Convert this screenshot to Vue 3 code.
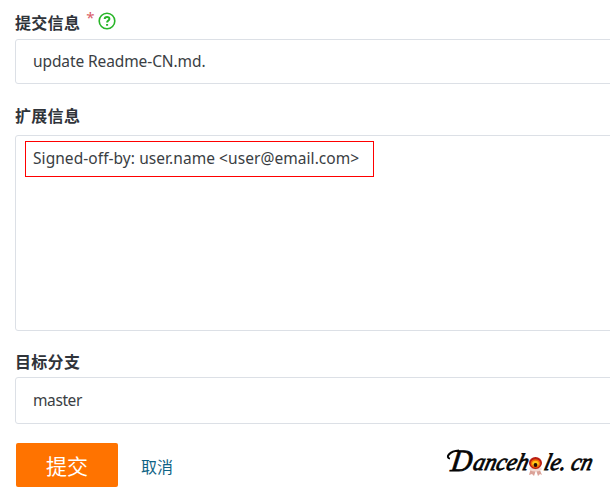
<script setup>
import { ref } from 'vue'

const message = ref('update Readme-CN.md.')
const extended = ref('Signed-off-by: user.name <user@email.com>')
const branch = ref('master')
</script>

<template>
  <main class="form">
    <div class="label first">
      <span>提交信息</span>
      <span class="required">*</span>
      <svg class="help" viewBox="0 0 18 18">
        <circle cx="9" cy="9" r="7.8" />
        <path d="M6.7 7.1C6.7 4.2 11.4 4.2 11.4 6.9C11.4 8.6 9.1 8.5 9.1 10.6M9.1 12V13.7" />
      </svg>
    </div>
    <div class="field message"><span class="value t1">{{ message }}</span></div>

    <div class="label second">扩展信息</div>
    <div class="field extended">
      <div class="marked"><span class="value t2">{{ extended }}</span></div>
    </div>

    <div class="label third">目标分支</div>
    <div class="field branch"><span class="value t3">{{ branch }}</span></div>

    <div class="actions">
      <button class="submit">提交</button>
      <a class="cancel">取消</a>
      <svg class="brand" viewBox="0 0 150 40">
        <g class="script">
          <text class="cap" transform="translate(9 28) skewX(-8)" textLength="21" lengthAdjust="spacingAndGlyphs">D</text>
          <text transform="translate(31 27) skewX(-14)" textLength="55" lengthAdjust="spacingAndGlyphs">anceh</text>
          <text transform="translate(102 27) skewX(-14)" textLength="22" lengthAdjust="spacingAndGlyphs">le.</text>
          <text transform="translate(129 27) skewX(-14)" textLength="21" lengthAdjust="spacingAndGlyphs">cn</text>
        </g>
        <path class="swash" d="M9 15.5C4 15 8 8 18 7.5" />
        <path class="ribbon" d="M90 25L88 32L91 31L93 33L95 27L97 33L99 31L101 32L98 25Z" />
        <ellipse class="ring" cx="94.5" cy="20" rx="6.5" ry="6" />
        <ellipse class="glow" cx="94.5" cy="20.5" rx="4.1" ry="3.4" />
        <path class="plate" d="M88.5 24Q94.5 28.5 100.5 24V27Q94.5 30 88.5 27Z" />
        <circle class="core" cx="94.5" cy="22" r="1.9" />
      </svg>
    </div>
  </main>
</template>

<style>
body { background: #fff; overflow: hidden; }
</style>

<style scoped>
.form {
  box-sizing: border-box;
  width: 610px;
  height: 500px;
  padding: 10px 0 0 15px;
  overflow: hidden;
  font-family: "Noto Sans", "Noto Sans CJK SC", sans-serif;
  color: #3a3e43;
}
.label {
  display: flex;
  font: 700 16px/24px "Noto Sans CJK SC", sans-serif;
  letter-spacing: 0.3px;
  color: #30343a;
}
.first { height: 29px; }
.second { margin-top: 19px; height: 32px; }
.third { margin-top: 18px; height: 28px; }
.required { width: 8px; margin-left: 6px; letter-spacing: 0; color: #d95c67; font: 400 15px/15px "Noto Sans", sans-serif; }
.help { width: 18px; height: 18px; margin: 2px 0 0 4px; fill: none; stroke: #28b528; stroke-width: 1.6; }
.help path { stroke-width: 2; }
.field {
  box-sizing: border-box;
  width: 605px;
  border: 1px solid #dce0e6;
  border-radius: 3px;
  background: #fff;
  padding-left: 17px;
}
.message { height: 45px; line-height: 43px; }
.extended { height: 196px; padding: 5px 0 0 9px; }
.branch { height: 47px; line-height: 45px; }
.value { font-size: 15.5px; white-space: nowrap; }
.t1 { letter-spacing: -0.1px; }
.t2 { letter-spacing: 0.06px; }
.t3 { letter-spacing: -0.4px; }
.marked {
  box-sizing: border-box;
  width: 349px;
  height: 36px;
  border: 1px solid #ff0000;
  padding-left: 7px;
  line-height: 32px;
}
.actions { display: flex; margin-top: 19px; height: 45px; align-items: flex-start; }
.submit {
  width: 102px;
  height: 44px;
  margin: 0 0 0 1px;
  padding: 0;
  border: 0;
  border-radius: 2px;
  background: #ff7300;
  color: #fff;
  font: 400 21px/44px "Noto Sans CJK SC", sans-serif;
}
.cancel { margin-left: 23px; width: 33px; color: #0f6385; font: 400 16px/46px "Noto Sans CJK SC", sans-serif; }
.brand { width: 150px; height: 40px; margin-left: 267px; overflow: visible; }
.script { font: italic 400 24px "Liberation Serif", serif; fill: #050505; stroke: #050505; stroke-width: .8; }
.cap { font-size: 31px; }
.swash { fill: none; stroke: #050505; stroke-width: 2; }
.ribbon { fill: #dba298; }
.ring { fill: #b91c12; }
.glow { fill: #ffc51b; stroke: #f56b0a; stroke-width: 1.5; }
.plate { fill: #f2d9d2; }
.core { fill: #250b05; }
</style>
